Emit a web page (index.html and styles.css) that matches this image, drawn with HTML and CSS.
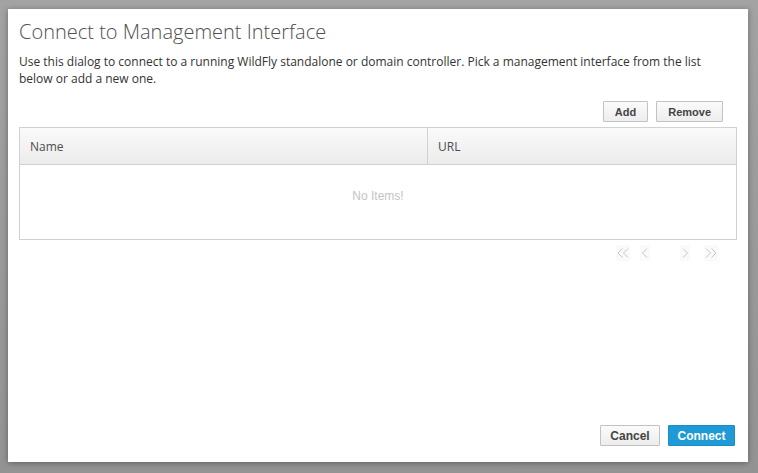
FILE: index.html
```html
<!DOCTYPE html>
<html>
<head>
<meta charset="utf-8">
<link rel="stylesheet" href="styles.css">
</head>
<body>
<div class="dialog">
  <h1 class="title">Connect to Management Interface</h1>
  <p class="desc">Use this dialog to connect to a running WildFly standalone or domain controller. Pick a management interface from the list below or add a new one.</p>
  <div class="tools">
    <button class="btn">Add</button>
    <button class="btn">Remove</button>
  </div>
  <div class="table">
    <div class="thead">
      <div class="th th-name">Name</div>
      <div class="th th-url">URL</div>
    </div>
    <div class="tbody">No Items!</div>
  </div>
  <div class="pager">
    <span class="pg pg-wide"><svg width="12" height="12" viewBox="0 0 12 12"><path d="M5.5 1.5 L1 6 L5.5 10.5 M11 1.5 L6.5 6 L11 10.5" fill="none" stroke="#c6c6c6" stroke-width="1"/></svg></span>
    <span class="pg pg-prev"><svg width="8" height="12" viewBox="0 0 8 12"><path d="M6 1.5 L1.5 6 L6 10.5" fill="none" stroke="#c6c6c6" stroke-width="1"/></svg></span>
    <span class="pg pg-next"><svg width="8" height="12" viewBox="0 0 8 12"><path d="M2 1.5 L6.5 6 L2 10.5" fill="none" stroke="#c6c6c6" stroke-width="1"/></svg></span>
    <span class="pg pg-wide pg-last"><svg width="12" height="12" viewBox="0 0 12 12"><path d="M1 1.5 L5.5 6 L1 10.5 M6.5 1.5 L11 6 L6.5 10.5" fill="none" stroke="#c6c6c6" stroke-width="1"/></svg></span>
  </div>
  <div class="spacer"></div>
  <div class="footer">
    <button class="btn btn-cancel">Cancel</button>
    <button class="btn btn-primary">Connect</button>
  </div>
</div>
</body>
</html>
```

FILE: styles.css
```css
html, body {
  margin: 0;
  padding: 0;
}
body {
  width: 758px;
  height: 473px;
  overflow: hidden;
  background: linear-gradient(#a3a3a3, #939393);
  padding-top: 9px;
  padding-left: 8px;
  box-sizing: border-box;
}
.dialog {
  width: 740px;
  height: 453px;
  background: #fff;
  box-sizing: border-box;
  padding: 10px 11px 16px 11px;
  display: flex;
  flex-direction: column;
  box-shadow: 0 1px 6px rgba(0,0,0,0.35);
  font-family: "Open Sans", "Liberation Sans", sans-serif;
}
.title {
  margin: 0;
  font-size: 20px;
  line-height: 26px;
  font-weight: 300;
  color: #505050;
}
.desc {
  margin: 8px 0 0 0;
  font-size: 12px;
  line-height: 17px;
  color: #333;
}
.tools {
  display: flex;
  justify-content: flex-end;
  gap: 8px;
  margin-top: 14px;
  padding-right: 14px;
}
.btn {
  font-family: "Liberation Sans", Arial, sans-serif;
  font-weight: 700;
  font-size: 11px;
  color: #444;
  height: 21px;
  padding: 0 11px;
  border: 1px solid #c2c2c2;
  background: linear-gradient(#fbfbfb, #ededed);
  border-radius: 1px;
  box-sizing: border-box;
}
.table {
  margin-top: 5px;
  border: 1px solid #d1d1d1;
}
.thead {
  display: flex;
  height: 36px;
  background: linear-gradient(#fafafa, #ececec);
  border-bottom: 1px solid #d1d1d1;
}
.th {
  display: flex;
  align-items: center;
  font-size: 12px;
  color: #4d4d4d;
  padding-left: 10px;
  box-sizing: border-box;
}
.th-name {
  width: 408px;
  border-right: 1px solid #d1d1d1;
}
.th-url {
  flex: 1;
}
.tbody {
  height: 74px;
  box-sizing: border-box;
  padding-bottom: 12px;
  display: flex;
  align-items: center;
  justify-content: center;
  font-family: "Liberation Sans", Arial, sans-serif;
  font-size: 12px;
  color: #c4c4c4;
}
.pager {
  display: flex;
  justify-content: flex-end;
  align-items: center;
  margin-top: 4px;
  padding-right: 19px;
  height: 18px;
}
.pg {
  width: 10px;
  height: 16px;
  display: flex;
  align-items: center;
  justify-content: center;
  background: #fafafa;
}
.pg-wide {
  width: 14px;
}
.pg-prev {
  margin-left: 10px;
}
.pg-next {
  margin-left: 30px;
}
.pg-last {
  margin-left: 14px;
}
.spacer {
  flex: 1;
}
.footer {
  display: flex;
  justify-content: flex-end;
  gap: 8px;
  padding-right: 2px;
}
.btn-cancel {
  width: 60px;
  height: 21px;
  padding: 0;
  font-size: 12px;
}
.btn-primary {
  width: 67px;
  height: 21px;
  padding: 0;
  font-size: 12px;
  color: #fff;
  background: #1f9ad6;
  border-color: #1a8ec6;
}
```
